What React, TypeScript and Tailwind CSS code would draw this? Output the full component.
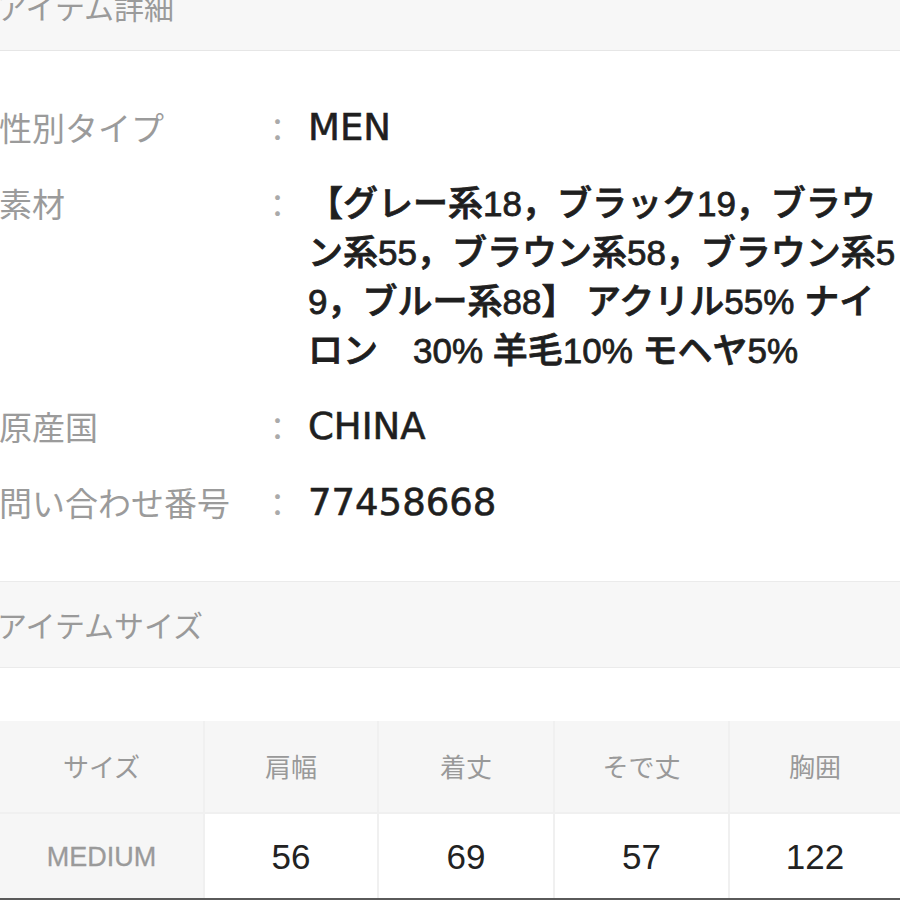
import React from "react";

function Row({
  label,
  lines,
  latin,
}: {
  label: string;
  lines: string[];
  latin?: boolean;
}) {
  return (
    <div className="grid grid-cols-[263px_46px_1fr] leading-[49px]">
      <div className="text-[33px] text-[#9b9b9b] whitespace-nowrap font-['Noto_Sans_CJK_JP',sans-serif]">
        {label}
      </div>
      <div className="text-[31px] text-[#aaaaaa] font-['Noto_Sans_CJK_JP',sans-serif]">
        ：
      </div>
      {latin ? (
        <div className="text-[37px] text-[#1f1f1f] [-webkit-text-stroke:0.6px_#1f1f1f] font-['DejaVu_Sans',sans-serif]">
          {lines[0]}
        </div>
      ) : (
        <div className="text-[35px] font-medium text-[#1f1f1f] [-webkit-text-stroke:0.8px_#1f1f1f] font-['Liberation_Sans','Noto_Sans_CJK_JP',sans-serif]">
          {lines.map((l, i) => (
            <div key={i} className="whitespace-pre">
              {l}
            </div>
          ))}
        </div>
      )}
    </div>
  );
}

export default function App() {
  const heads = ["サイズ", "肩幅", "着丈", "そで丈", "胸囲"];
  const nums = ["56", "69", "57", "122"];
  return (
    <div className="w-[900px] h-[900px] overflow-hidden bg-white border-b-2 border-[#5a5a5a]">
      <div className="-mt-[37px] h-[88px] bg-[#f7f7f7] border-b border-[#e6e6e6] flex items-center">
        <span className="-ml-[3px] text-[30px] text-[#9a9a9a] font-['Noto_Sans_CJK_JP',sans-serif]">
          アイテム詳細
        </span>
      </div>
      <div className="-ml-[1px] pt-[52px] flex flex-col gap-[27px]">
        <Row label="性別タイプ" lines={["MEN"]} latin />
        <Row
          label="素材"
          lines={[
            "【グレー系18，ブラック19，ブラウ",
            "ン系55，ブラウン系58，ブラウン系5",
            "9，ブルー系88】 アクリル55% ナイ",
            "ロン　30% 羊毛10% モヘヤ5%",
          ]}
        />
        <Row label="原産国" lines={["CHINA"]} latin />
        <Row label="問い合わせ番号" lines={["77458668"]} latin />
      </div>
      <div className="mt-[54px] h-[87px] bg-[#f7f7f7] border-y border-[#ebebeb] flex items-center">
        <span className="-ml-[3px] text-[30px] text-[#9a9a9a] font-['Noto_Sans_CJK_JP',sans-serif]">
          アイテムサイズ
        </span>
      </div>
      <div className="mt-[53px] grid grid-cols-[203px_172px_174px_173px_1fr] gap-[2px] bg-[#f0f0f0]">
        {heads.map((h) => (
          <div
            key={h}
            className="h-[91px] pb-[2px] bg-[#f6f6f6] flex items-center justify-center text-[26px] text-[#999999] font-['Noto_Sans_CJK_JP',sans-serif]"
          >
            {h}
          </div>
        ))}
        <div className="h-[90px] pb-[3px] bg-[#f6f6f6] flex items-center justify-center text-[27px] text-[#9a9a9a] [-webkit-text-stroke:0.3px_#9a9a9a] font-['Liberation_Sans',sans-serif]">
          MEDIUM
        </div>
        {nums.map((n) => (
          <div
            key={n}
            className="h-[90px] pb-[3px] bg-white flex items-center justify-center text-[35px] text-[#222222] font-['Liberation_Sans',sans-serif]"
          >
            {n}
          </div>
        ))}
      </div>
    </div>
  );
}
